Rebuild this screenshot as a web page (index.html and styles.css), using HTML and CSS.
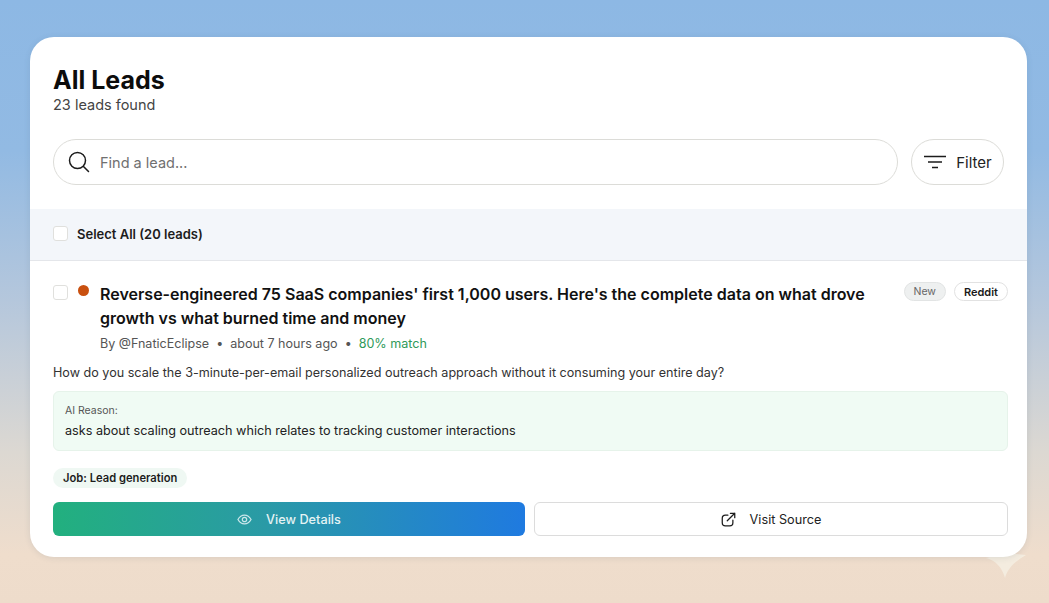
FILE: index.html
```html
<!DOCTYPE html>
<html lang="en">
<head>
  <meta charset="UTF-8">
  <title>All Leads</title>
  <link rel="stylesheet" href="styles.css">
</head>
<body>
  <svg class="sparkle" width="42" height="26" viewBox="0 0 42 26">
    <path d="M1 5C10 7 17 14 20 25C23 14 31 8 41 2L20 0z" fill="#f4ecdf"/>
  </svg>

  <div class="card">
    <div class="card-head">
      <h1>All Leads</h1>
      <p class="count">23 leads found</p>
      <div class="search-row">
        <div class="search">
          <svg class="search-icon" width="24" height="24" viewBox="0 0 24 24" fill="none" stroke="#1c1c1c" stroke-width="1.5" stroke-linecap="round">
            <circle cx="10.5" cy="10.5" r="8"/>
            <path d="M16.5 16.500l5 5"/>
          </svg>
          <span class="placeholder">Find a lead...</span>
        </div>
        <div class="filter">
          <svg width="24" height="14" viewBox="0 0 24 14" fill="none" stroke="#1c1c1c" stroke-width="1.5">
            <path d="M1 1.500h22M5 7h14M9 12.500h6"/>
          </svg>
          <span>Filter</span>
        </div>
      </div>
    </div>

    <div class="select-bar">
      <span class="checkbox"></span>
      <span class="select-label">Select All (20 leads)</span>
    </div>

    <div class="lead">
      <div class="lead-top">
        <span class="checkbox"></span>
        <span class="dot"></span>
        <div class="lead-main">
          <h2>Reverse-engineered 75 SaaS companies' first 1,000 users. Here's the complete data on what drove growth vs what burned time and money</h2>
          <div class="meta">
            <span>By @FnaticEclipse</span>
            <span class="sep">•</span>
            <span>about 7 hours ago</span>
            <span class="sep">•</span>
            <span class="match">80% match</span>
          </div>
        </div>
        <div class="tags">
          <span class="tag tag-new">New</span>
          <span class="tag tag-source">Reddit</span>
        </div>
      </div>

      <p class="desc">How do you scale the 3-minute-per-email personalized outreach approach without it consuming your entire day?</p>

      <div class="reason">
        <div class="reason-label">AI Reason:</div>
        <div class="reason-text">asks about scaling outreach which relates to tracking customer interactions</div>
      </div>

      <span class="job">Job: Lead generation</span>

      <div class="actions">
        <div class="btn btn-primary">
          <svg width="15" height="15" viewBox="0 0 24 24" fill="none" stroke="#c9e6ea" stroke-width="2">
            <path d="M1.500 12C4 7.500 7.500 5 12 5s8 2.500 10.500 7c-2.500 4.500-6 7-10.500 7s-8-2.500-10.500-7z"/>
            <circle cx="12" cy="12" r="3.500"/>
          </svg>
          <span>View Details</span>
        </div>
        <div class="btn btn-outline">
          <svg width="15" height="15" viewBox="0 0 24 24" fill="none" stroke="#1c1c1c" stroke-width="2" stroke-linecap="round" stroke-linejoin="round">
            <path d="M11 5H7a5 5 0 0 0-5 5v7a5 5 0 0 0 5 5h7a5 5 0 0 0 5-5v-4"/>
            <path d="M10 14L22 2M15 2h7v7"/>
          </svg>
          <span>Visit Source</span>
        </div>
      </div>
    </div>
  </div>
</body>
</html>
```

FILE: styles.css
```css
html, body {
  height: 100%;
}

body {
  margin: 0;
  height: 603px;
  overflow: hidden;
  position: relative;
  box-sizing: border-box;
  padding: 37px 22px 0 30px;
  font-family: 'Inter', sans-serif;
  color: #111;
  background: linear-gradient(180deg, #8db8e4 0%, #92bae3 25%, #b5c7dc 50%, #dcd8d2 75%, #efddcc 92%, #eedccb 100%);
}

.card {
  position: relative;
  height: 520px;
  background: #fff;
  border-radius: 24px;
  overflow: hidden;
  box-shadow: 0 1px 6px rgba(60, 80, 110, 0.12);
}

.card-head {
  padding: 28px 23px 24px;
}

h1 {
  margin: 0;
  font-size: 25px;
  line-height: 30px;
  font-weight: 700;
  color: #0c0c0c;
}

.count {
  margin: 0;
  font-size: 14.500px;
  line-height: 20px;
  color: #444;
}

.search-row {
  display: flex;
  gap: 13px;
  margin-top: 24px;
}

.search {
  flex: 1;
  height: 46px;
  box-sizing: border-box;
  display: flex;
  align-items: center;
  gap: 9px;
  padding: 0 13px;
  border: 1px solid #dcdcd8;
  border-radius: 23px;
}

.placeholder {
  font-size: 14.500px;
  color: #707070;
}

.filter {
  width: 93px;
  height: 46px;
  box-sizing: border-box;
  display: flex;
  align-items: center;
  justify-content: center;
  gap: 9px;
  border: 1px solid #dcdcd8;
  border-radius: 23px;
  font-size: 15px;
  color: #222;
}

.select-bar {
  height: 52px;
  box-sizing: border-box;
  display: flex;
  align-items: center;
  gap: 9px;
  padding: 0 23px 2px;
  background: #f3f6fa;
  border-bottom: 1px solid #e4e6ea;
}

.select-label {
  font-size: 13px;
  font-weight: 600;
  color: #1c1c1c;
}

.checkbox {
  width: 15px;
  height: 15px;
  flex: none;
  background: #fff;
  border: 1px solid #e0e0dd;
  border-radius: 3px;
  box-sizing: border-box;
}

.lead {
  padding: 21px 19px 0 23px;
}

.lead-top {
  display: flex;
  align-items: flex-start;
}

.lead-top .checkbox {
  margin-top: 3px;
}

.dot {
  width: 11px;
  height: 11px;
  flex: none;
  margin: 3px 11px 0 10px;
  border-radius: 50%;
  background: #c9500f;
}

.lead-main {
  flex: 1;
}

h2 {
  margin: 0;
  font-size: 16.030px;
  line-height: 24px;
  font-weight: 600;
  color: #111;
}

.meta {
  display: flex;
  gap: 7px;
  margin-top: 5px;
  font-size: 12.550px;
  line-height: 18px;
  color: #555;
}

.match {
  color: #2f9a5a;
}

.tags {
  display: flex;
  gap: 8px;
  flex: none;
  margin: 0 0 0 30px;
}

.tag {
  height: 19px;
  box-sizing: border-box;
  display: flex;
  align-items: center;
  padding: 0 9px;
  border-radius: 10px;
  font-size: 10.500px;
}

.tag-new {
  background: #eef0f0;
  border: 1px solid #e2e4e4;
  color: #666;
}

.tag-source {
  background: #fff;
  border: 1px solid #e2e2e2;
  font-size: 11px;
  font-weight: 600;
  color: #1a1a1a;
}

.desc {
  margin: 10px 0 0;
  font-size: 12.600px;
  line-height: 20px;
  color: #333;
}

.reason {
  height: 60px;
  box-sizing: border-box;
  margin-top: 8px;
  padding: 11px 11px 0;
  background: #f0fbf4;
  border: 1px solid #e6f3ea;
  border-radius: 6px;
}

.reason-label {
  font-size: 10.500px;
  line-height: 15px;
  color: #555;
}

.reason-text {
  margin-top: 4px;
  font-size: 12.650px;
  line-height: 18px;
  color: #222;
}

.job {
  display: inline-block;
  margin-top: 17px;
  padding: 0 10px;
  height: 20px;
  line-height: 20px;
  border-radius: 10px;
  background: #eff8f3;
  font-size: 11.200px;
  font-weight: 600;
  color: #1c1c1c;
  vertical-align: top;
}

.actions {
  display: flex;
  gap: 9px;
  margin-top: 14px;
}

.btn {
  flex: 1;
  height: 34px;
  box-sizing: border-box;
  display: flex;
  align-items: center;
  justify-content: center;
  gap: 14px;
  border-radius: 6px;
  font-size: 12.700px;
}

.btn-primary {
  background: linear-gradient(90deg, #22b07e 0%, #2a9aa6 45%, #1f7ae0 100%);
  color: #e4f3f4;
  font-weight: 500;
}

.btn-outline {
  background: #fff;
  border: 1px solid #dcdcdc;
  color: #222;
}

.sparkle {
  position: absolute;
  left: 985px;
  top: 553px;
}
```
